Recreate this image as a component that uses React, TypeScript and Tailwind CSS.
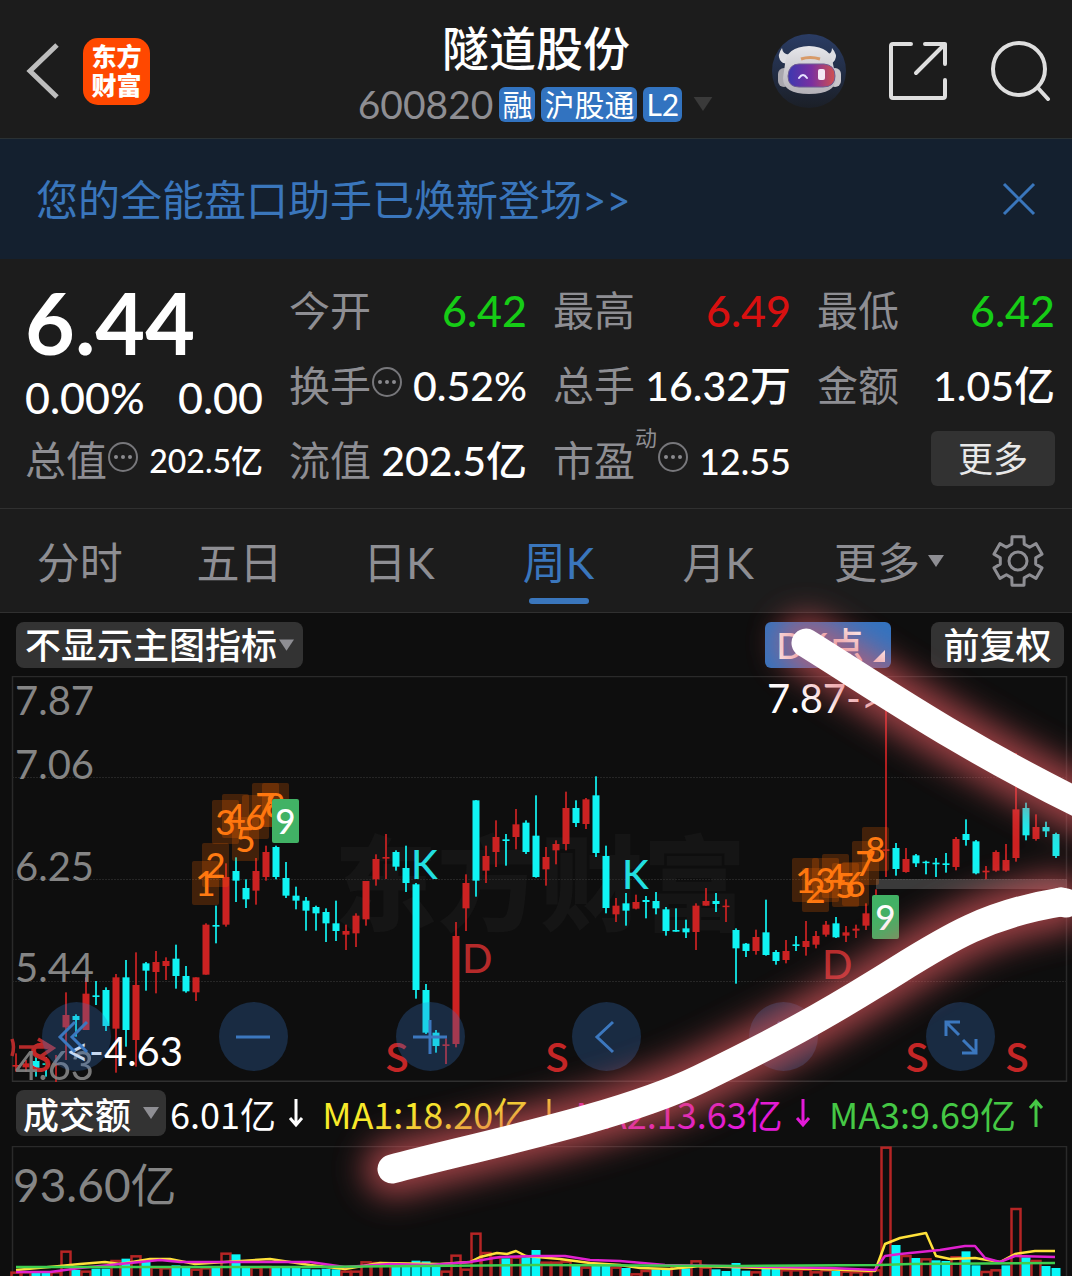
import React from "react";

type Candle = [up: 0 | 1, high: number, top: number, bottom: number, low: number];

// Weekly candles: direction, then high / body top / body bottom / low in ticks (three per unit) below y = 770.
const candles: Candle[] = [
  [1, 850, 885, 890, 905], [1, 870, 880, 892, 905], [0, 860, 873, 893, 920], [0, 862, 880, 884, 920], [1, 855, 880, 886, 938],
  [1, 667, 735, 772, 870], [0, 733, 738, 750, 800], [1, 622, 671, 780, 780], [0, 633, 676, 681, 705], [0, 652, 660, 768, 783],
  [1, 612, 622, 776, 908], [0, 570, 622, 780, 830], [1, 547, 645, 810, 890], [0, 576, 580, 602, 662], [1, 543, 576, 606, 670],
  [1, 562, 573, 588, 630], [0, 524, 566, 618, 656], [0, 588, 618, 664, 668], [1, 622, 622, 667, 693], [1, 460, 464, 614, 614],
  [0, 407, 465, 470, 520], [1, 280, 321, 464, 470], [0, 262, 303, 332, 396], [0, 328, 354, 388, 414], [1, 264, 303, 362, 404],
  [1, 227, 246, 321, 332], [0, 227, 231, 321, 328], [0, 276, 324, 377, 384], [0, 350, 377, 392, 418], [0, 381, 392, 422, 482],
  [0, 407, 411, 430, 482], [0, 415, 426, 460, 516], [0, 392, 460, 483, 513], [1, 464, 483, 494, 540], [1, 430, 437, 490, 531],
  [1, 333, 333, 448, 467], [1, 253, 267, 328, 347], [1, 192, 261, 266, 327], [0, 241, 246, 290, 302], [0, 227, 294, 339, 366],
  [0, 339, 343, 660, 686], [0, 642, 660, 788, 792], [0, 780, 788, 828, 848], [1, 805, 823, 828, 882], [1, 456, 498, 822, 832],
  [1, 313, 339, 415, 483], [0, 90, 91, 332, 380], [1, 227, 258, 302, 339], [1, 151, 201, 246, 291], [0, 192, 208, 213, 287],
  [1, 117, 163, 201, 238], [0, 151, 158, 246, 252], [0, 76, 197, 321, 323], [1, 231, 261, 298, 347], [1, 211, 222, 241, 283],
  [1, 65, 114, 222, 241], [0, 91, 114, 159, 171], [1, 84, 88, 162, 177], [0, 19, 76, 249, 261], [0, 227, 258, 414, 430],
  [1, 384, 407, 433, 456], [0, 369, 400, 422, 467], [1, 374, 396, 416, 418], [0, 378, 390, 396, 445], [0, 366, 393, 415, 433],
  [0, 411, 418, 483, 497], [0, 415, 480, 485, 485], [0, 449, 475, 487, 504], [1, 400, 407, 486, 540], [1, 354, 393, 407, 407],
  [0, 369, 393, 402, 426], [1, 388, 407, 411, 456], [0, 475, 480, 535, 641], [0, 519, 521, 543, 561], [1, 479, 501, 543, 554],
  [0, 389, 487, 555, 557], [0, 540, 546, 573, 584], [1, 510, 543, 570, 580], [0, 498, 523, 528, 543], [1, 453, 513, 531, 557],
  [1, 483, 498, 524, 535], [1, 453, 464, 494, 500], [0, 441, 460, 502, 504], [1, 468, 487, 497, 516], [1, 464, 476, 482, 504],
  [1, 400, 430, 467, 480], [1, 358, 400, 470, 490], [1, -210, 238, 242, 321], [0, 219, 234, 297, 317], [1, 234, 267, 306, 308],
  [0, 252, 256, 280, 291], [0, 272, 275, 278, 313], [0, 264, 278, 283, 321], [0, 249, 280, 285, 308], [1, 201, 207, 291, 301],
  [0, 148, 192, 210, 227], [0, 210, 214, 310, 313], [1, 288, 302, 307, 328], [1, 241, 246, 302, 305], [1, 222, 270, 302, 305],
  [1, -51, 118, 264, 275], [0, 98, 114, 196, 211], [1, 133, 171, 207, 212], [0, 155, 171, 184, 201], [0, 188, 192, 258, 264],
];

// Top of each turnover bar, in ticks (three per unit) below y = 1080.
const turnover = [
  575, 574, 578, 575, 574, 512, 570, 572, 566, 566, 540, 536, 526, 546, 560, 562, 556, 560, 566, 562, 560, 518, 523, 558, 560,
  558, 560, 558, 562, 566, 568, 566, 568, 572, 572, 544, 546, 550, 560, 556, 542, 544, 556, 572, 524, 566, 458, 516, 530, 535,
  530, 532, 510, 545, 545, 542, 558, 560, 556, 556, 560, 564, 580, 570, 568, 570, 553, 565, 541, 560, 568, 573, 549, 572, 574,
  567, 567, 568, 568, 566, 574, 568, 573, 572, 574, 573, 568, 200, 495, 525, 534, 535, 541, 543, 529, 514, 556, 573, 568, 556,
  384, 532, 540, 558, 564,
];
const hollowBars = [46, 63, 66, 78, 91];
const filledBars = [71, 99];

const cx = (i: number) => 16 + i * 10;

const marks: [string, number, number][] = [
  ["1", 192, 861], ["2", 202, 843], ["3", 212, 800], ["4", 222, 794], ["5", 232, 817], ["6", 242, 795], ["7", 252, 783], ["8", 262, 783], ["9", 272, 799],
  ["1", 792, 858], ["2", 802, 868], ["3", 812, 858], ["4", 822, 854], ["5", 832, 863], ["6", 842, 862], ["7", 852, 841], ["8", 862, 827], ["9", 872, 895],
];

const letters: [string, number, number, string][] = [
  ["K", 411, 879, "#22dfe0"], ["K", 622, 889, "#22dfe0"], ["D", 462, 973, "#b52a2a"], ["D", 822, 979, "#b52a2a"],
];

function PriceChart() {
  return (
    <svg viewBox="0 676 1072 406" className="block w-full" role="img" aria-label="周K线图">
      <text x="334" y="923" fontSize="103" fontWeight="900" fill="#151515" fontFamily="'Noto Sans CJK SC', sans-serif">东方财富</text>
      <path d="M12.5 1082V676.5H1066.5V1082" fill="none" stroke="#2a2a2a" strokeWidth="1.5" />
      <path d="M12 1081.5H1067" stroke="#303030" strokeWidth="2" />
      <path d="M12 777.5H1067M12 879.5H1067M12 981.5H1067" stroke="#262626" strokeDasharray="2 1" />
      {candles.map(([up, h, t, b, l], i) => (
        <g key={i} fill={up ? "#cc2222" : "#10f4f4"}>
          <rect x={cx(i) - 1} y={770 + h / 3} width="2" height={(l - h) / 3} opacity="0.85" />
          <rect x={cx(i) - 3.5} y={770 + t / 3} width="7" height={Math.max(1.5, (b - t) / 3)} />
        </g>
      ))}
      <rect x="876" y="879" width="191" height="10" fill="#8c8c8c" opacity="0.35" />
      <g fontFamily="Lato, sans-serif" fontSize="40" fill="#858585">
        <text x="15" y="715">7.87</text>
        <text x="15" y="779">7.06</text>
        <text x="15" y="881">6.25</text>
        <text x="15" y="982">5.44</text>
      </g>
      {marks.map(([n, x, y], i) => (
        <g key={i}>
          <rect x={x} y={y} width="27" height="44" rx="2" fill={n === "9" ? "#41b265" : "#ff6a00"} opacity={n === "9" ? 1 : 0.22} />
          <text x={x + 13.5} y={y + 35} textAnchor="middle" fontSize="35" fontWeight="500" fontFamily="Lato, sans-serif" fill={n === "9" ? "#ffffff" : "#ff7a12"}>{n}</text>
        </g>
      ))}
      <g fontFamily="Lato, sans-serif" fontSize="40">
        {letters.map(([s, x, y, c], i) => (
          <text key={i} x={x} y={y} fill={c} fontWeight="500">{s}</text>
        ))}
      </g>
      <g fontFamily="'Noto Sans CJK SC', sans-serif" fontSize="39">
        {[28, 385, 545, 905, 1005].map((x) => (
          <text key={x} x={x} y="1072" fontWeight="500" fill="#c42626">S</text>
        ))}
      </g>
      <path d="M19 1047H52M38 1039L53 1048L40 1057M12 1039Q15 1047 12 1056" fill="none" stroke="#b52a2a" strokeWidth="3.5" />
      <g fontFamily="Lato, sans-serif" fontSize="40">
        <text x="15" y="1080" fill="#858585" opacity="0.9">4.63</text>
        <text x="767" y="713" fill="#fff">7.87-&gt;</text>
        <text x="183" y="1066" fill="#fff" textAnchor="end">&lt;-4.63</text>
      </g>
    </svg>
  );
}

function TurnoverChart() {
  return (
    <svg viewBox="0 1146 1072 130" className="block w-full" role="img" aria-label="成交额图">
      <path d="M12.5 1276V1146.5H1066.5V1276" fill="none" stroke="#2a2a2a" strokeWidth="1.5" />
      <text x="13" y="1202" fontSize="46" fill="#858585" fontFamily="Lato, 'Noto Sans CJK SC', sans-serif">93.60亿</text>
      {turnover.map((v, i) => {
        const y = 1080 + v / 3;
        const hollow = (candles[i][0] === 1 && !filledBars.includes(i)) || hollowBars.includes(i);
        return hollow ? (
          <rect key={i} x={cx(i) - 4.5} y={y + 1} width="9" height="150" fill="none" stroke="#b52525" strokeWidth="2.5" />
        ) : (
          <rect key={i} x={cx(i) - 4.5} y={y} width="9" height="150" fill="#08f8f8" />
        );
      })}
      <g fill="none" strokeWidth="2.5" strokeLinejoin="round">
        <polyline stroke="#ffe23a" points="16,1270 60,1266 80,1264 105,1262 120,1264 150,1259 170,1259 195,1264 225,1262 270,1259 310,1265 345,1269 380,1263 440,1264 470,1262 480,1257 497,1253 507,1254 516,1251 526,1256 560,1259 590,1263 620,1265 640,1268 670,1269 700,1266 760,1268 820,1269 875,1271 885,1244 900,1238 926,1233 936,1256 950,1259 975,1258 1000,1262 1015,1254 1035,1251 1055,1251" />
        <polyline stroke="#e020d0" points="16,1272 50,1272 80,1268 120,1264 160,1260 180,1262 240,1262 310,1262 345,1267 390,1264 430,1265 470,1262 500,1257 536,1256 565,1256 590,1260 620,1261 665,1265 780,1267 830,1268 875,1270 885,1256 900,1254 940,1250 965,1246 975,1246 985,1258 1000,1262 1015,1256 1055,1257" />
        <polyline stroke="#3fcf4f" points="16,1267 150,1267 300,1267 536,1265 740,1266 880,1265 910,1264 1055,1263" />
      </g>
    </svg>
  );
}

function Scribble() {
  const upper = "M806 643C880 689 960 745 1085 806";
  const lower = "M392 1169C470 1148 620 1118 700 1079S820 1018 880 981S980 915 1061 902";
  return (
    <svg viewBox="0 0 1072 1276" className="pointer-events-none absolute inset-x-0 top-0 w-full" aria-hidden="true">
      <defs>
        <filter id="glow" filterUnits="userSpaceOnUse" x="250" y="540" width="900" height="740">
          <feGaussianBlur stdDeviation="16" />
        </filter>
      </defs>
      <g fill="none" strokeLinecap="round">
        <g stroke="#e0585f" strokeWidth="56" opacity="0.68" filter="url(#glow)">
          <path d={upper} />
          <path d={lower} />
        </g>
        <g stroke="#ffffff" strokeWidth="29">
          <path d={upper} />
          <path d={lower} />
          <path d="M1061 902L1066 903" />
        </g>
      </g>
    </svg>
  );
}

function Robot() {
  return (
    <svg viewBox="0 0 74 74" className="size-[74px]" aria-hidden="true">
      <defs>
        <linearGradient id="sky" x1="0" y1="0" x2="0" y2="1">
          <stop offset="0" stopColor="#2a3c64" />
          <stop offset="1" stopColor="#1b1f27" />
        </linearGradient>
        <linearGradient id="visor" x1="0" y1="0" x2="1" y2="0">
          <stop offset="0" stopColor="#3c38b0" />
          <stop offset="0.5" stopColor="#7a2fa0" />
          <stop offset="1" stopColor="#d2504f" />
        </linearGradient>
        <linearGradient id="shell" x1="0" y1="0" x2="0" y2="1">
          <stop offset="0" stopColor="#e6e6ea" />
          <stop offset="1" stopColor="#b3b0b7" />
        </linearGradient>
      </defs>
      <circle cx="37" cy="37" r="37" fill="url(#sky)" />
      <path d="M10 14Q5 21 8 26Q11 31 18 29L20 20Q11 22 10 14ZM60 14Q66 21 63 26Q60 31 54 29L51 20Q60 22 60 14Z" fill="#dddde2" />
      <rect x="6" y="34" width="12" height="19" rx="6" fill="#a9a7ae" />
      <rect x="57" y="34" width="12" height="19" rx="6" fill="#c9c6cc" />
      <path d="M13 30Q14 13 37 12Q60 13 61 30L64 44Q64 60 37 60Q11 60 11 44Z" fill="url(#shell)" />
      <path d="M16 42Q17 30 27 30H52Q63 31 63 42Q63 53 51 53H27Q16 53 16 42Z" fill="url(#visor)" stroke="#6d5a93" strokeWidth="1" />
      <path d="M29 25Q38 22 48 25" stroke="#d89a68" strokeWidth="3" fill="none" />
      <path d="M27 44Q31 38 35 44" stroke="#e6e2ff" strokeWidth="2" fill="none" strokeLinecap="round" />
      <rect x="46" y="35" width="7" height="11" rx="2" fill="#f4e6f6" />
    </svg>
  );
}

function Gear() {
  const pts: string[] = [];
  for (let k = 0; k < 6; k++) {
    const steps: [number, number][] = [[-20, 18], [-14, 25], [14, 25], [20, 18]];
    steps.forEach(([d, r]) => {
      const a = ((-90 + 60 * k + d) * Math.PI) / 180;
      pts.push(`${(26 + r * Math.cos(a)).toFixed(1)},${(26 + r * Math.sin(a)).toFixed(1)}`);
    });
  }
  return (
    <svg viewBox="0 0 52 52" className="size-[52px]" fill="none" stroke="#8e8e93" strokeWidth="3" aria-hidden="true">
      <polygon points={pts.join(" ")} strokeLinejoin="round" />
      <circle cx="26" cy="26" r="9" />
    </svg>
  );
}

function Caret({ className }: { className: string }) {
  return (
    <svg viewBox="0 0 16 12" className={className} fill="currentColor" aria-hidden="true">
      <path d="M0 0H16L8 12Z" />
    </svg>
  );
}

function Info() {
  return (
    <svg viewBox="0 0 32 32" className="mb-2 size-8 shrink-0" fill="none" stroke="#77777b" strokeWidth="2" aria-hidden="true">
      <circle cx="16" cy="16" r="14" />
      <g fill="#8a8a8e" stroke="none">
        <circle cx="9" cy="16" r="2" />
        <circle cx="16" cy="16" r="2" />
        <circle cx="23" cy="16" r="2" />
      </g>
    </svg>
  );
}

function Stat({ label, value, tone = "text-white", size = "text-[41px]", info, sup }: {
  label: string; value: string; tone?: string; size?: string; info?: boolean; sup?: string;
}) {
  return (
    <div className="flex h-[75px] items-center justify-between whitespace-nowrap">
      <dt className="flex items-center text-[41px] leading-[50px] text-[#8e8e93]">
        {label}
        {sup && <sup className="mb-6 text-[22px] leading-6">{sup}</sup>}
        {info && <Info />}
      </dt>
      <dd className={`leading-[50px] font-medium ${size} ${tone}`}>{value}</dd>
    </div>
  );
}

const round = "absolute top-[80.3%] flex size-[69px] items-center justify-center rounded-full bg-[#3678c8]/28 text-[#3c78bf]";

function RoundIcon({ d }: { d: string }) {
  return (
    <svg viewBox="0 0 40 40" className="size-10" fill="none" stroke="currentColor" strokeWidth="3" aria-hidden="true">
      <path d={d} />
    </svg>
  );
}

const tag = "rounded-md bg-[#3273c0] px-[3px] text-[30px] leading-[35px] text-white";
const tab = "h-[103px] pt-1.5 text-[43px] whitespace-nowrap text-[#8e8e93]";

export default function App() {
  return (
    <div className="relative min-h-screen w-full overflow-hidden bg-[#0e0e0e] font-[Lato,'Noto_Sans_CJK_SC',sans-serif] text-white">
      <header className="grid h-[139px] grid-cols-[1fr_auto_1fr] items-center border-b border-[#2a3134] bg-[#1c1c1c] pt-1">
        <div className="flex items-center gap-6 pl-[25px]">
          <button aria-label="返回">
            <svg viewBox="0 0 34 56" className="h-14 w-[34px]" fill="none" stroke="#bdbdbd" strokeWidth="5" aria-hidden="true">
              <path d="M32 2L5 28L32 54" />
            </svg>
          </button>
          <a href="#home" className="flex size-[67px] flex-col items-center justify-center rounded-[15px] bg-[#ff4800] text-[25px] leading-[29px] font-black">
            <span>东方</span>
            <span>财富</span>
          </a>
        </div>
        <div className="flex flex-col items-center pt-1">
          <h1 className="text-[47px] leading-[58px] font-medium">隧道股份</h1>
          <button className="mt-1 flex h-[46px] items-center gap-1.5">
            <span className="text-[39px] leading-[46px] text-[#8e8e93]">600820</span>
            <span className={tag}>融</span>
            <span className={tag}>沪股通</span>
            <span className={tag}>L2</span>
            <Caret className="ml-1 h-[14px] w-[22px] text-[#3a3a3a]" />
          </button>
        </div>
        <div className="flex items-center justify-end gap-[42px] pr-5">
          <button aria-label="智能助手"><Robot /></button>
          <button aria-label="分享">
            <svg viewBox="0 0 60 60" className="size-[60px]" fill="none" stroke="#dedede" strokeWidth="4" strokeLinecap="round" strokeLinejoin="round" aria-hidden="true">
              <path d="M23 3H5Q3 3 3 5V55Q3 57 5 57H55Q57 57 57 55V39M37 3H57V23M57 3L28 32" />
            </svg>
          </button>
          <button aria-label="搜索">
            <svg viewBox="0 0 62 60" className="h-[60px] w-[62px]" fill="none" stroke="#dedede" strokeWidth="4" strokeLinecap="round" aria-hidden="true">
              <circle cx="29" cy="28" r="26" />
              <path d="M48 47L58 58" />
            </svg>
          </button>
        </div>
      </header>

      <div className="flex h-[120px] items-center justify-between bg-[#14202f] px-9 text-[#3a76bc]">
        <a href="#assistant" className="pt-0.5 text-[42px] leading-[60px]">您的全能盘口助手已焕新登场&gt;&gt;</a>
        <button aria-label="关闭">
          <svg viewBox="0 0 34 34" className="size-[34px]" fill="none" stroke="currentColor" strokeWidth="3" aria-hidden="true">
            <path d="M2 2L32 32M32 2L2 32" />
          </svg>
        </button>
      </div>

      <section className="grid h-[250px] grid-cols-4 gap-x-[26px] border-b border-[#303030] bg-[#1c1c1c] pt-[14px] pr-[17px] pl-[25px]">
        <dl>
          <div className="h-[150px]">
            <dd className="h-[100px] text-[86px] leading-[98px] font-bold">6.44</dd>
            <dd className="flex justify-between text-[43px] leading-[50px] font-medium"><span>0.00%</span><span>0.00</span></dd>
          </div>
          <Stat label="总值" value="202.5亿" size="text-[32px]" info />
        </dl>
        <dl>
          <Stat label="今开" value="6.42" tone="text-[#16cc16]" size="text-[43px]" />
          <Stat label="换手" value="0.52%" info />
          <Stat label="流值" value="202.5亿" />
        </dl>
        <dl>
          <Stat label="最高" value="6.49" tone="text-[#d81010]" size="text-[43px]" />
          <Stat label="总手" value="16.32万" />
          <Stat label="市盈" value="12.55" size="text-[36px]" sup="动" info />
        </dl>
        <div>
          <dl>
            <Stat label="最低" value="6.42" tone="text-[#16cc16]" size="text-[43px]" />
            <Stat label="金额" value="1.05亿" />
          </dl>
          <div className="flex h-[75px] items-center justify-end pb-1">
            <button className="h-[55px] w-[124px] rounded-md bg-[#323232] text-[35px] text-[#e8e8e8]">更多</button>
          </div>
        </div>
      </section>

      <nav className="flex h-[104px] items-center border-b border-[#303030] bg-[#1c1c1c] pr-7">
        <div className="grid w-[798px] max-w-[76.5%] grid-cols-5">
          <button className={tab}>分时</button>
          <button className={tab}>五日</button>
          <button className={tab}>日K</button>
          <button className="relative h-[103px] pt-1.5 text-[43px] whitespace-nowrap text-[#3a76bc]" aria-current="page">
            周K
            <span className="absolute bottom-2 left-1/2 h-1.5 w-[60px] -translate-x-1/2 rounded-full bg-[#3a76bc]" />
          </button>
          <button className={tab}>月K</button>
        </div>
        <div className="ml-auto flex items-center gap-12">
          <button className={tab}>
            <span className="flex items-center gap-2">更多<Caret className="mb-1.5 h-3 w-4" /></span>
          </button>
          <button aria-label="设置"><Gear /></button>
        </div>
      </nav>

      <div className="flex h-[63px] items-center gap-10 pr-2 pl-4 text-[36px] font-medium">
        <button className="mr-auto flex h-[46px] items-center gap-0.5 rounded-lg bg-[#333333] px-[9px] leading-[46px]">
          不显示主图指标<Caret className="h-3 w-[15px] text-[#8e8e93]" />
        </button>
        <button className="relative h-[46px] w-[126px] rounded-md bg-[#3273c0] pr-4 leading-[46px]">
          DK点
          <svg viewBox="0 0 12 12" className="absolute right-1.5 bottom-1.5 size-3" fill="#fff" aria-hidden="true"><path d="M12 0V12H0Z" /></svg>
        </button>
        <button className="h-[46px] w-[133px] rounded-lg bg-[#333333] leading-[46px]">前复权</button>
      </div>

      <div className="relative">
        <PriceChart />
        <button aria-label="最早" className={`${round} left-[3.9%]`}><RoundIcon d="M19 5L4 20L19 35M31 5L16 20L31 35" /></button>
        <button aria-label="缩小" className={`${round} left-[20.4%]`}><RoundIcon d="M3 20H37" /></button>
        <button aria-label="放大" className={`${round} left-[36.9%]`}><RoundIcon d="M3 20H37M20 3V37" /></button>
        <button aria-label="向左" className={`${round} left-[53.4%]`}><RoundIcon d="M26 5L10 20L26 35" /></button>
        <button aria-label="向右" className={`${round} left-[69.9%]`}><RoundIcon d="M14 5L30 20L14 35" /></button>
        <button aria-label="全屏" className={`${round} left-[86.4%]`}><RoundIcon d="M5 19V5H19M5 5L18 18M35 22V36H21M35 36L22 23" /></button>
      </div>

      <div className="flex h-16 items-center pr-7 pb-0.5 pl-4 font-['Noto_Sans_CJK_SC',sans-serif] text-[36px] leading-[46px] whitespace-nowrap">
        <button className="mr-1 flex h-[46px] items-center gap-3 rounded-lg bg-[#333333] px-[7px] font-medium">
          成交额<Caret className="h-3 w-4 text-[#8e8e93]" />
        </button>
        <div className="flex grow justify-between">
          <Flow text="6.01亿" tone="text-white" />
          <Flow text="MA1:18.20亿" tone="text-[#f7ea2a]" />
          <Flow text="MA2:13.63亿" tone="text-[#e31ad8]" />
          <Flow text="MA3:9.69亿" tone="text-[#45c845]" rising />
        </div>
      </div>

      <TurnoverChart />
      <Scribble />
    </div>
  );
}

function Flow({ text, tone, rising }: { text: string; tone: string; rising?: boolean }) {
  return (
    <span className={`flex items-center gap-3 ${tone}`}>
      {text}
      <svg viewBox="0 0 16 30" className="h-[30px] w-4" fill="none" stroke="currentColor" strokeWidth="3" role="img" aria-label={rising ? "上升" : "下降"}>
        <path d={rising ? "M8 29V3M2 10L8 3L14 10" : "M8 1V27M2 20L8 27L14 20"} />
      </svg>
    </span>
  );
}
